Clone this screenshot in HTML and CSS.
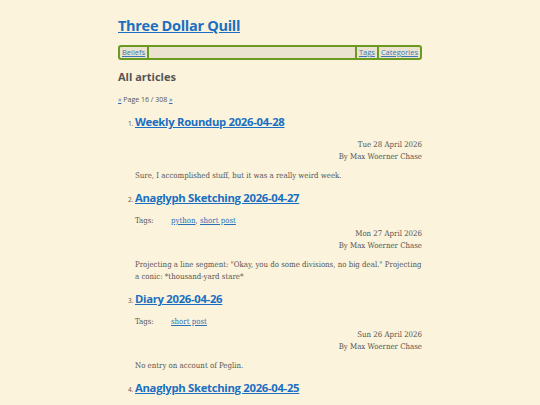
FILE: index.html
```html
<!DOCTYPE html>
<html>
<head>
<meta charset="utf-8">
<link rel="stylesheet" href="styles.css">
</head>
<body>
<div class="page">
  <h1 class="site-title"><a href="#">Three Dollar Quill</a></h1>
  <nav class="nav">
    <a class="nav-item nav-left" href="#">Beliefs</a>
    <span class="nav-fill"></span>
    <a class="nav-item nav-mid" href="#">Tags</a>
    <a class="nav-item" href="#">Categories</a>
  </nav>
  <h2 class="section-title">All articles</h2>
  <p class="pager"><a href="#">«</a> Page 16 / 308 <a href="#">»</a></p>
  <ol class="articles">
    <li class="article">
      <h3 class="article-title"><a href="#">Weekly Roundup 2026-04-28</a></h3>
      <div class="meta">
        <div>Tue 28 April 2026</div>
        <div>By Max Woerner Chase</div>
      </div>
      <p class="summary">Sure, I accomplished stuff, but it was a really weird week.</p>
    </li>
    <li class="article">
      <h3 class="article-title"><a href="#">Anaglyph Sketching 2026-04-27</a></h3>
      <div class="tags"><span class="tags-label">Tags:</span><span><a href="#">python</a>, <a href="#">short post</a></span></div>
      <div class="meta">
        <div>Mon 27 April 2026</div>
        <div>By Max Woerner Chase</div>
      </div>
      <p class="summary">Projecting a line segment: "Okay, you do some divisions, no big deal." Projecting a conic: *thousand-yard stare*</p>
    </li>
    <li class="article">
      <h3 class="article-title"><a href="#">Diary 2026-04-26</a></h3>
      <div class="tags"><span class="tags-label">Tags:</span><span><a href="#">short post</a></span></div>
      <div class="meta">
        <div>Sun 26 April 2026</div>
        <div>By Max Woerner Chase</div>
      </div>
      <p class="summary">No entry on account of Peglin.</p>
    </li>
    <li class="article">
      <h3 class="article-title"><a href="#">Anaglyph Sketching 2026-04-25</a></h3>
    </li>
  </ol>
</div>
</body>
</html>
```
FILE: styles.css
```css
html, body {
  margin: 0;
  padding: 0;
  background: #fbf3dc;
}
body {
  font-family: "DejaVu Serif Condensed", "DejaVu Serif", serif;
  font-size: 7.8px;
  color: #555;
}
.page {
  width: 304px;
  margin: 0 auto;
  padding-top: 15px;
}
a { color: #2a70b8; }
.site-title {
  font-family: "Open Sans", sans-serif;
  font-weight: 700;
  font-size: 14.5px;
  line-height: 22px;
  margin: 0 0 8px;
  letter-spacing: -0.3px;
}
.site-title a { color: #1a6fc2; }
.nav {
  display: flex;
  border: 2px solid #6a9a20;
  border-radius: 3px;
  background: #ebe3cf;
  height: 11px;
  font-family: "Open Sans", sans-serif;
  font-size: 7.5px;
  line-height: 11px;
}
.nav-item {
  padding: 0 2px;
  color: #3a78b8;
}
.nav-left { border-right: 2px solid #6a9a20; }
.nav-fill { flex: 1; }
.nav-mid { border-left: 2px solid #6a9a20; border-right: 2px solid #6a9a20; }
.section-title {
  font-family: "Open Sans", sans-serif;
  font-weight: 700;
  font-size: 11px;
  color: #555;
  margin: 9px 0 0;
  line-height: 16px;
}
.pager {
  margin: 10px 0 0;
  font-family: "Open Sans", sans-serif;
  font-size: 7px;
  line-height: 10px;
}
.articles {
  margin: 8px 0 0;
  padding-left: 17px;
}
.article::marker {
  font-family: "Open Sans", sans-serif;
  font-size: 6.5px;
}
.article-title {
  font-family: "Open Sans", sans-serif;
  font-weight: 700;
  font-size: 11.3px;
  line-height: 18px;
  margin: 0 0 8px;
  letter-spacing: -0.3px;
}
.article-title a { color: #1a6fc2; }
.tags {
  display: flex;
  line-height: 12px;
}
.tags-label { width: 36px; }
.meta {
  text-align: right;
  line-height: 12px;
}
.tags + .meta { margin-top: 1px; }
.summary {
  margin: 7px 0 7px;
  line-height: 12px;
}
```
